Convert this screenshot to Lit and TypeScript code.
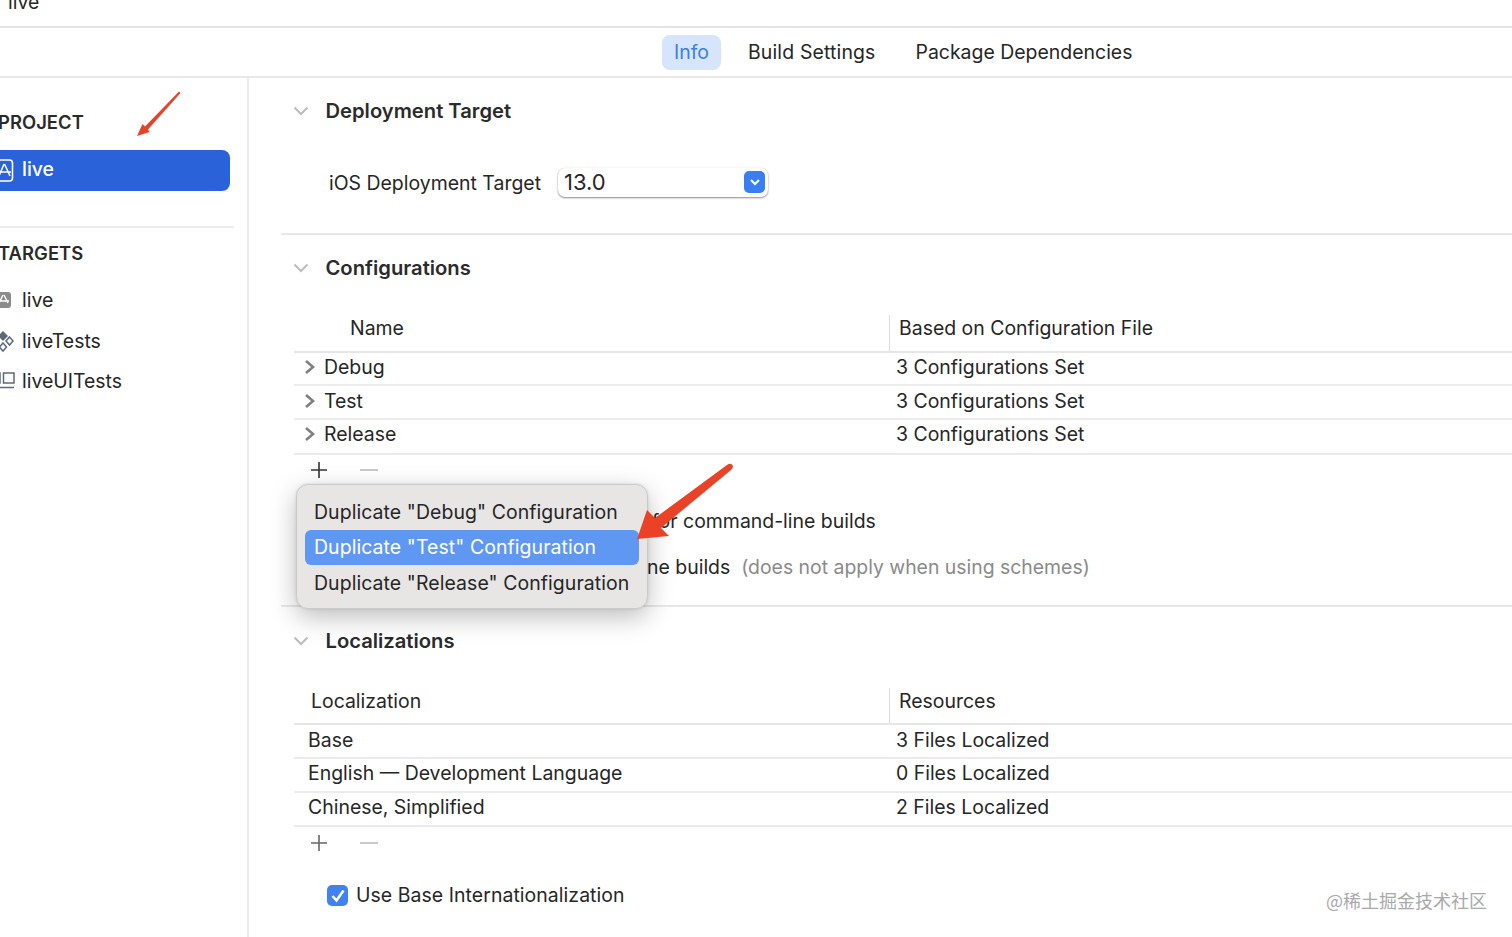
import { LitElement, html, css, svg } from "lit";
import { customElement } from "lit/decorators.js";

const chevDown = html`<svg class="chev" width="16" height="10" viewBox="0 0 16 10"><path d="M1.5 1.5 L8 8 L14.5 1.5" fill="none" stroke="#bcbcbc" stroke-width="2"/></svg>`;
const chevRight = html`<svg class="rchev" width="10" height="14" viewBox="0 0 10 14"><path d="M1 1 L8 7 L1 13" fill="none" stroke="#808080" stroke-width="2.6"/></svg>`;
const addRemove = (dark: boolean) => html`<div class="addrm">
  <svg width="18" height="18" viewBox="0 0 18 18"><path d="M9 1 V17 M1 9 H17" fill="none" stroke="${dark ? "#333" : "#666"}" stroke-width="1.6"/></svg>
  <svg width="18" height="18" viewBox="0 0 18 18"><path d="M0 9 H18" fill="none" stroke="#bdbdbd" stroke-width="1.6"/></svg>
</div>`;

const appIconSel = html`<svg class="ico" width="18" height="24" viewBox="0 0 18 24"><rect x="-4" y="1" width="16.5" height="21" rx="3" fill="none" stroke="#fff" stroke-width="1.6"/><path d="M4.5 5 L10 17 M4 5 L-1 17 M-2 13 H11" fill="none" stroke="#fff" stroke-width="1.5"/></svg>`;
const appIcon = html`<svg class="ico" width="18" height="18" viewBox="0 0 18 18"><rect x="-5" y="1" width="16" height="16" rx="3" fill="#8b8b8b"/><path d="M4 4 L8 12 M3 4 L-1 12 M-1 10 H9" fill="none" stroke="#fff" stroke-width="1.3"/></svg>`;
const testIcon = html`<svg class="ico" width="18" height="24" viewBox="0 0 18 24"><path d="M3 2 L8 7 L3 12 L-2 7 Z" fill="#5d6b78"/><path d="M9.5 8 L13 12 L9.5 16 L6 12 Z M3 14 L6.5 18 L3 22 L-0.5 18 Z" fill="none" stroke="#5d6b78" stroke-width="1.5"/></svg>`;
const uiIcon = html`<svg class="ico" width="18" height="20" viewBox="0 0 18 20"><path d="M-2 2 H0 V12 H-2 M3.5 2 H14 V12 H3.5 Z M0 16.5 H14" fill="none" stroke="#5d6b78" stroke-width="1.5"/></svg>`;

const arrows = svg`
  <path d="M137 136 L142.5 124 L145 126.5 L179 91.5 L180.5 93 L148 129.5 L149.5 132 Z" fill="#e8432a"/>
  <path d="M637 539 L647 510 L655 518 L727 465 Q731 462 733 466 Q733 468 731 470 L661 528 L669 536 Z" fill="#ea4227"/>
`;

@customElement("app-root")
export class AppRoot extends LitElement {
  static styles = css`
    :host { display: block; position: relative; width: 1512px; height: 937px; overflow: hidden; background: #fff;
      font-family: Inter, "Liberation Sans", sans-serif; font-size: 19.45px; color: #262626; }
    .top { height: 26px; border-bottom: 2px solid #e4e4e4; position: relative; overflow: hidden; padding-left: 8px; }
    .top span { display: block; line-height: 20px; margin-top: -8px; }
    .tabs { height: 48px; border-bottom: 2px solid #e8e8e8; display: flex; align-items: center; gap: 15px; padding-left: 662px; }
    .tab { padding: 0 12px; height: 35px; line-height: 35px; border-radius: 8px; }
    .tab.on { background: #d6e5fb; color: #3b7fe3; }
    .tab:nth-child(2) { letter-spacing: 0.15px; }
    .tab:nth-child(3) { margin-left: 1px; }
    .body { display: grid; grid-template-columns: 249px 1fr; height: 859px; }
    .side { border-right: 2px solid #ececec; overflow: hidden; }
    .side h3 { margin: 0; font-size: 18.4px; font-weight: 600; letter-spacing: 0.05px; line-height: 25px; margin-left: -2px; color: #2a2a2a; }
    .project { padding-top: 32px; }
    .sel { margin-top: 15px; width: 234px; height: 41px; margin-left: -4px; background: #2a62d9; border-radius: 0 8px 8px 0; color: #fff; display: flex; align-items: center; font-weight: 500; }
    .divide { height: 2px; background: #ececec; width: 234px; margin-top: 35px; }
    .targets { padding-top: 13px; }
    .item { display: flex; align-items: center; height: 40.5px; }
    .ico { flex: none; margin-right: 4px; overflow: visible; }
    .sel .ico { margin-right: 0; margin-left: 4px; }
    .sel span { margin-left: 4px; margin-top: -3px; }
    .list { margin-top: 14px; }
    .main { min-width: 0; padding-left: 32px; }
    .sec { position: relative; border-bottom: 2px solid #e8e8e8; }
    .sec.dep { height: 155px; }
    .sec.cfg { height: 370px; }
    .sec.loc { border-bottom: none; }
    .hdr { height: 66px; display: flex; align-items: center; padding-left: 12px; font-weight: 600; font-size: 20.2px; gap: 16.5px; color: #2b2b2b; }
    .hdr span { margin-top: -2px; }
    .loc .hdr { height: 65px; padding-top: 1px; }
    .loc .hdr span { margin-top: 0; }
    .dep-row { display: flex; align-items: center; padding-left: 48px; margin-top: 24px; height: 30px; gap: 17px; }
    .select { width: 210px; height: 29px; margin-top: -2px; box-sizing: border-box; border-radius: 7px; background: #fff; box-shadow: 0 1px 2px rgba(0,0,0,.45), 0 0 1px rgba(0,0,0,.15);
      display: flex; align-items: center; justify-content: space-between; padding: 0 3px 0 6px; font-size: 22px; }
    .btn { width: 21px; height: 22px; border-radius: 5px; background: #3a7ff0; display: flex; align-items: center; justify-content: center; }
    .table { margin-left: 13px; }
    .thead { height: 50px; display: grid; grid-template-columns: 595px 1fr; align-items: end; border-bottom: 2px solid #e6e6e6; }
    .thead > div { padding-bottom: 9px; line-height: 27px; }
    .loc .thead > div { padding-bottom: 8px; }
    .thead .c2 { border-left: 1px solid #dcdcdc; padding-left: 9px; }
    .thead .name { padding-left: 56px; }
    .thead .lname { padding-left: 17px; }
    .row { height: 34px; box-sizing: border-box; padding-bottom: 3px; display: grid; grid-template-columns: 595px 1fr; align-items: center; border-bottom: 2px solid #ececec; }
    .cfg .row:nth-child(2) { height: 33px; }
    .cfg .row:nth-child(4) { height: 35px; padding-bottom: 5px; }
    .loc .row:nth-child(3), .loc .row:nth-child(4) { padding-bottom: 5px; }
    .row .c2 { padding-left: 7px; }
    .row > .c1 { display: flex; align-items: center; padding-left: 11px; gap: 9px; }
    .loc .row > .c1 { padding-left: 14px; }
    .addrm { height: 30px; display: flex; align-items: center; gap: 32px; padding-left: 16px; }
    .loc .addrm { margin-top: 1px; }
    .opt { height: 46px; display: flex; align-items: center; white-space: nowrap; }
    .opt.first { margin-top: 13px; padding-left: 371px; }
    .opt.second { padding-left: 366px; }
    .hint { color: #8a8a8a; margin-left: 11px; font-size: 19.4px; }
    .popup { position: absolute; left: 15px; top: 249px; width: 352px; height: 125px; box-sizing: border-box; padding: 9px 8px 0; background: #e8e5e5; border: 1px solid #cdcaca; border-radius: 12px;
      box-shadow: 0 8px 26px rgba(0,0,0,.26), 0 0 3px rgba(0,0,0,.12); letter-spacing: 0.08px; }
    .mi { height: 35.5px; display: flex; align-items: center; padding-left: 9px; border-radius: 6px; white-space: nowrap; }
    .mi.on { background: #5f98f2; color: #fff; }
    .check { display: flex; align-items: center; gap: 8px; padding-left: 46px; margin-top: 21px; height: 32px; letter-spacing: 0.06px; }
    .box { width: 21px; height: 21px; border-radius: 5px; background: #4083f0; display: flex; align-items: center; justify-content: center; }
    .over { position: absolute; left: 0; top: 0; pointer-events: none; }
    .mark { position: absolute; right: 25px; bottom: 25px; font-family: "Noto Sans CJK SC", sans-serif; font-size: 18px; color: #a9a9a9; line-height: 24px; }
  `;

  private cfgRow(n: string) {
    return html`<div class="row"><div class="c1">${chevRight}<span>${n}</span></div><div class="c2">3 Configurations Set</div></div>`;
  }
  private locRow(n: string, v: string) {
    return html`<div class="row"><div class="c1"><span>${n}</span></div><div class="c2">${v}</div></div>`;
  }

  render() {
    return html`
      <div class="top"><span>live</span></div>
      <div class="tabs">
        <div class="tab on">Info</div>
        <div class="tab">Build Settings</div>
        <div class="tab">Package Dependencies</div>
      </div>
      <div class="body">
        <aside class="side">
          <div class="project">
            <h3>PROJECT</h3>
            <div class="sel">${appIconSel}<span>live</span></div>
          </div>
          <div class="divide"></div>
          <div class="targets">
            <h3>TARGETS</h3>
            <div class="list">
              <div class="item">${appIcon}<span>live</span></div>
              <div class="item">${testIcon}<span>liveTests</span></div>
              <div class="item">${uiIcon}<span>liveUITests</span></div>
            </div>
          </div>
        </aside>
        <main class="main">
          <section class="sec dep">
            <div class="hdr">${chevDown}<span>Deployment Target</span></div>
            <div class="dep-row">
              <span>iOS Deployment Target</span>
              <div class="select"><span>13.0</span><div class="btn"><svg width="12" height="8" viewBox="0 0 12 8"><path d="M2 2 L6 6 L10 2" fill="none" stroke="#fff" stroke-width="2"/></svg></div></div>
            </div>
          </section>
          <section class="sec cfg">
            <div class="hdr">${chevDown}<span>Configurations</span></div>
            <div class="table">
              <div class="thead"><div class="name">Name</div><div class="c2">Based on Configuration File</div></div>
              ${this.cfgRow("Debug")}${this.cfgRow("Test")}${this.cfgRow("Release")}
            </div>
            <div class="table">${addRemove(true)}</div>
            <div class="opt first">for command-line builds</div>
            <div class="opt second">ne builds<span class="hint">(does not apply when using schemes)</span></div>
            <div class="popup">
              <div class="mi">Duplicate "Debug" Configuration</div>
              <div class="mi on">Duplicate "Test" Configuration</div>
              <div class="mi">Duplicate "Release" Configuration</div>
            </div>
          </section>
          <section class="sec loc">
            <div class="hdr">${chevDown}<span>Localizations</span></div>
            <div class="table">
              <div class="thead"><div class="lname">Localization</div><div class="c2">Resources</div></div>
              ${this.locRow("Base", "3 Files Localized")}
              ${this.locRow("English — Development Language", "0 Files Localized")}
              ${this.locRow("Chinese, Simplified", "2 Files Localized")}
            </div>
            <div class="table">${addRemove(false)}</div>
            <div class="check"><div class="box"><svg width="16" height="15" viewBox="0 0 16 15"><path d="M2.5 8 L6.5 12.5 L13.5 2.5" fill="none" stroke="#fff" stroke-width="2.6"/></svg></div><span>Use Base Internationalization</span></div>
          </section>
        </main>
      </div>
      <svg class="over" width="1512" height="937" viewBox="0 0 1512 937">${arrows}</svg>
      <div class="mark">@稀土掘金技术社区</div>
    `;
  }
}
